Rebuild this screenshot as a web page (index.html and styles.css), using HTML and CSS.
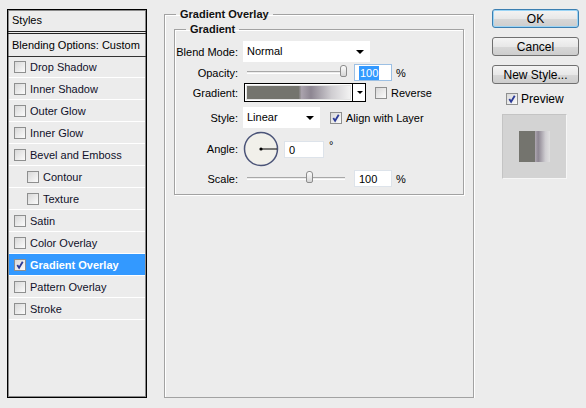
FILE: index.html
```html
<!DOCTYPE html>
<html lang="en">

<head>
    <meta charset="utf-8">
    <title>Layer Style</title>
    <link rel="stylesheet" href="styles.css">
</head>

<body>
    <div class="dialog">

        <!-- venstre liste med effekter -->
        <div class="styles">
            <div class="styles-head">Styles</div>
            <div class="blending">Blending Options: Custom</div>
            <ul>
                <li><span class="cb"></span>Drop Shadow</li>
                <li><span class="cb"></span>Inner Shadow</li>
                <li><span class="cb"></span>Outer Glow</li>
                <li><span class="cb"></span>Inner Glow</li>
                <li><span class="cb"></span>Bevel and Emboss</li>
                <li class="sub"><span class="cb"></span>Contour</li>
                <li class="sub"><span class="cb"></span>Texture</li>
                <li><span class="cb"></span>Satin</li>
                <li><span class="cb"></span>Color Overlay</li>
                <li class="valgt"><span class="cb on"><svg viewBox="0 0 11 11"><path d="M2.5 5.5 L4.5 8.5 L8.5 2" /></svg></span>Gradient Overlay</li>
                <li><span class="cb"></span>Pattern Overlay</li>
                <li><span class="cb"></span>Stroke</li>
            </ul>
        </div>

        <fieldset class="outer">
            <legend>Gradient Overlay</legend>
            <fieldset class="inner">
                <legend>Gradient</legend>

                <div class="row blend">
                    <label>Blend Mode:</label>
                    <div class="select wide">Normal<span class="arrow"></span></div>
                </div>

                <div class="row opacity">
                    <label>Opacity:</label>
                    <div class="slider"><span class="thumb" style="left: 93px"></span></div>
                    <div class="num"><span class="sel">100</span></div>
                    <span class="pct">%</span>
                </div>

                <div class="row grad">
                    <label>Gradient:</label>
                    <div class="swatch">
                        <span class="fill"></span>
                        <span class="drop"><span class="arrow"></span></span>
                    </div>
                    <span class="cb"></span><span class="cb-label">Reverse</span>
                </div>

                <div class="row style">
                    <label>Style:</label>
                    <div class="select narrow">Linear<span class="arrow"></span></div>
                    <span class="cb on"><svg viewBox="0 0 11 11"><path d="M2.5 5.5 L4.5 8.5 L8.5 2" /></svg></span><span class="cb-label">Align with Layer</span>
                </div>

                <div class="row angle">
                    <label>Angle:</label>
                    <svg class="dial" viewBox="0 0 36 36" width="36" height="36">
                        <circle cx="18" cy="18" r="16.5" fill="#f1f0ea" stroke="#4b5478" stroke-width="1.5" />
                        <line x1="18" y1="18" x2="34" y2="18" stroke="#000" stroke-width="1" />
                        <circle cx="18" cy="18" r="1.6" fill="#000" />
                    </svg>
                    <div class="num angle-num">0</div>
                    <span class="deg">°</span>
                </div>

                <div class="row scale">
                    <label>Scale:</label>
                    <div class="slider"><span class="thumb" style="left: 59px"></span></div>
                    <div class="num">100</div>
                    <span class="pct">%</span>
                </div>
            </fieldset>
        </fieldset>

        <div class="buttons">
            <button class="btn ok">OK</button>
            <button class="btn">Cancel</button>
            <button class="btn">New Style...</button>
            <div class="preview">
                <span class="cb on"><svg viewBox="0 0 11 11"><path d="M2.5 5.5 L4.5 8.5 L8.5 2" /></svg></span><span class="cb-label">Preview</span>
            </div>
            <div class="thumbbox">
                <span class="sample"></span>
            </div>
        </div>

    </div>
</body>

</html>
```

FILE: styles.css
```css
body {
    margin: 0;
    background-color: #ececec;
    font-family: "Liberation Sans", Arial, sans-serif;
    font-size: 11px;
    color: #000;
}

.dialog {
    display: flex;
    align-items: flex-start;
    padding: 8px 0 0 7px;
}

/* liste */

.styles {
    width: 140px;
    height: 389px;
    margin-top: 1px;
    box-sizing: border-box;
    border: 1px solid #000;
    box-shadow: inset 0 0 0 1px #8a8a8a;
}

.styles-head {
    height: 21px;
    line-height: 21px;
    padding-left: 4px;
    border-bottom: 3px double #222;
}

.blending {
    height: 22px;
    line-height: 22px;
    padding-left: 4px;
    border-bottom: 1px solid #333;
}

.styles ul {
    list-style: none;
    margin: 0;
    padding: 0;
}

.styles li {
    display: flex;
    align-items: center;
    height: 21px;
    margin: -1px 1px 1px 1px;
    padding-left: 5px;
    border-bottom: 1px solid #fff;
    color: #10102a;
}

.styles li.sub {
    padding-left: 18px;
}

.styles li .cb {
    margin-right: 4px;
}

.styles li.valgt {
    background-color: #3399ff;
    color: #fff;
    font-weight: bold;
}

/* checkbox */

.cb {
    display: inline-block;
    position: relative;
    width: 10px;
    height: 10px;
    border: 1px solid #8e8f8f;
    background: linear-gradient(135deg, #d8d8d8, #fbfbfb);
    flex: none;
}

.cb svg {
    position: absolute;
    left: 0;
    top: 0;
    width: 10px;
    height: 10px;
}

.cb svg path {
    fill: none;
    stroke: #2c3b97;
    stroke-width: 2;
}

.cb-label {
    margin-left: 4px;
}

/* felter */

fieldset {
    margin: 0;
    min-width: 0;
    border: 1px solid #a2a2a2;
    box-shadow: inset 1px 1px 0 #fff, 1px 1px 0 #fff;
}

legend {
    font-weight: bold;
    line-height: 13px;
    padding: 0 4px;
    color: #111;
}

.outer {
    width: 310px;
    height: 390px;
    box-sizing: border-box;
    margin-left: 17px;
    padding: 2px 9px 0 9px;
}

.outer > legend {
    margin-left: 2px;
}

.inner {
    padding: 5px 0 7px 0;
}

.inner > legend {
    margin-left: 11px;
}

.row {
    display: flex;
    align-items: center;
}

.row label {
    width: 63px;
    text-align: right;
    margin-right: 5px;
    flex: none;
}

.blend {
    height: 21px;
}

.opacity {
    height: 17px;
    margin-top: 2px;
}

.grad {
    height: 19px;
    margin-top: 2px;
}

.style {
    height: 21px;
    margin-top: 5px;
}

.angle {
    height: 36px;
    margin-top: 3px;
}

.scale {
    height: 17px;
    margin-top: 3px;
}

.select {
    position: relative;
    height: 21px;
    line-height: 21px;
    box-sizing: border-box;
    padding-left: 4px;
    background-color: #fff;
}

.select.wide {
    width: 127px;
}

.select.narrow {
    width: 77px;
}

.arrow {
    position: absolute;
    right: 6px;
    top: 9px;
    width: 0;
    height: 0;
    border-left: 4px solid transparent;
    border-right: 4px solid transparent;
    border-top: 4px solid #000;
}

.slider {
    position: relative;
    width: 98px;
    height: 1px;
    margin-left: 4px;
    border-top: 1px solid #a8a8a8;
    border-bottom: 1px solid #fff;
}

.thumb {
    position: absolute;
    top: -7px;
    width: 7px;
    height: 12px;
    box-sizing: border-box;
    border: 1px solid #8c8c8c;
    border-radius: 3px 3px 2px 2px;
    background: linear-gradient(#fdfdfd, #d6d6d6);
}

.num {
    width: 38px;
    height: 17px;
    line-height: 16px;
    box-sizing: border-box;
    margin-left: 9px;
    padding-left: 4px;
    background-color: #fff;
    border: 1px solid #dde3ea;
}

.opacity .num {
    border-color: #9cc0e4;
}

.sel {
    background-color: #3399ff;
    color: #fff;
    padding: 1px 1px;
}

.pct {
    margin-left: 4px;
}

.swatch {
    position: relative;
    display: flex;
    width: 122px;
    height: 19px;
    margin-left: 1px;
    box-sizing: border-box;
    border: 1px solid #000;
    background-color: #fff;
}

.fill {
    flex: 1;
    margin: 1px;
    border: 1px solid #e4e4e4;
    background: linear-gradient(90deg, #74746e 0%, #74746e 50%, #aaa3ad 53%, #8d8692 62%, #cfcdd1 82%, #f2f2f2 100%);
}

.drop {
    position: relative;
    width: 12px;
    border-left: 1px solid #000;
}

.drop .arrow {
    right: 2px;
    top: 7px;
    border-left-width: 3px;
    border-right-width: 3px;
    border-top-width: 3px;
}

.grad .cb {
    margin-left: 9px;
}

.style .cb {
    margin-left: 10px;
}

.angle-num {
    width: 40px;
    margin-left: 5px;
}

.deg {
    margin-left: 5px;
    margin-top: -8px;
}

/* knapper */

.buttons {
    display: flex;
    flex-direction: column;
    margin-left: 18px;
    margin-top: 1px;
    width: 87px;
}

.btn {
    height: 19px;
    margin-bottom: 9px;
    padding: 0;
    font-family: "Liberation Sans", Arial, sans-serif;
    font-size: 12px;
    color: #000;
    border: 1px solid #707070;
    border-radius: 3px;
    background: linear-gradient(#f4f4f4 0%, #e8e8e8 50%, #d8d8d8 51%, #cdcdcd 100%);
}

.btn.ok {
    border-color: #3c7fb1;
    box-shadow: inset 0 0 0 1px #9ad4f5;
}

.preview {
    display: flex;
    align-items: center;
    margin-top: -1px;
    padding-left: 14px;
    font-size: 12px;
}

.preview .cb-label {
    margin-left: 3px;
}

.thumbbox {
    display: flex;
    align-items: center;
    justify-content: center;
    width: 65px;
    height: 65px;
    margin-top: 8px;
    margin-left: 10px;
    box-sizing: border-box;
    background-color: #d3d3d3;
    border: 1px solid #f6f6f6;
    border-top-color: #c4c4c4;
    border-left-color: #c4c4c4;
}

.sample {
    width: 31px;
    height: 31px;
    background: linear-gradient(90deg, #74746e 0%, #74746e 50%, #aaa3ad 53%, #8d8692 62%, #cfcdd1 85%, #e0e0e0 100%);
}
```
